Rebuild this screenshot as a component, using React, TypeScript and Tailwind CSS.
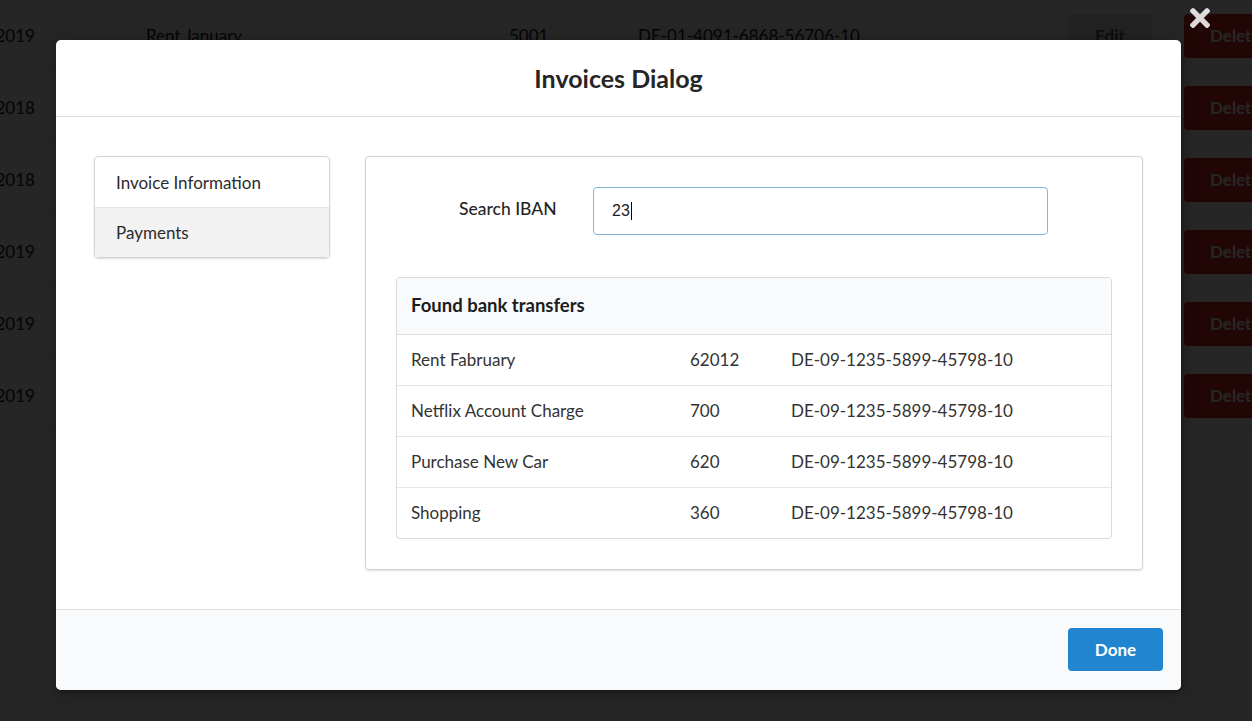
type Transfer = {
    title: string;
    amount: string;
    iban: string;
};

const transfers: Transfer[] = [
    { title: 'Rent Fabruary', amount: '62012', iban: 'DE-09-1235-5899-45798-10' },
    { title: 'Netflix Account Charge', amount: '700', iban: 'DE-09-1235-5899-45798-10' },
    { title: 'Purchase New Car', amount: '620', iban: 'DE-09-1235-5899-45798-10' },
    { title: 'Shopping', amount: '360', iban: 'DE-09-1235-5899-45798-10' },
];

const invoices = [
    { date: '01.01.2019', title: 'Rent January', amount: '5001', iban: 'DE-01-4091-6868-56706-10' },
    { date: '12.11.2018', title: 'Electricity', amount: '120', iban: 'DE-02-4091-6868-56706-10' },
    { date: '20.12.2018', title: 'Insurance', amount: '340', iban: 'DE-03-4091-6868-56706-10' },
    { date: '05.02.2019', title: 'Phone Bill', amount: '45', iban: 'DE-04-4091-6868-56706-10' },
    { date: '14.03.2019', title: 'Gym Membership', amount: '30', iban: 'DE-05-4091-6868-56706-10' },
    { date: '28.03.2019', title: 'Internet', amount: '40', iban: 'DE-06-4091-6868-56706-10' },
];

function CloseIcon() {
    return (
        <svg width="20" height="20" viewBox="0 80 352 352" fill="currentColor">
            <path d="M242.72 256l100.07-100.07c12.28-12.28 12.28-32.19 0-44.48l-22.24-22.24c-12.28-12.28-32.19-12.28-44.48 0L176 189.28 75.93 89.21c-12.28-12.28-32.19-12.28-44.48 0L9.21 111.45c-12.28 12.28-12.28 32.19 0 44.48L109.28 256 9.21 356.07c-12.28 12.28-12.28 32.19 0 44.48l22.24 22.24c12.28 12.28 32.2 12.28 44.48 0L176 322.72l100.07 100.07c12.28 12.28 32.2 12.28 44.48 0l22.24-22.24c12.28-12.28 12.28-32.19 0-44.48L242.72 256z" />
        </svg>
    );
}

export default function App() {
    return (
        <div className="relative h-[721px] overflow-hidden bg-white text-[17px] text-[#212121] [font-family:Lato,'Noto_Sans',sans-serif]">
            {/* page behind the dimmer */}
            <div className="-mt-px">
                {invoices.map((inv) => (
                    <div key={inv.date} className="flex h-[72px] items-center border-b border-[#e8e8e9] pt-[2px]">
                        <div className="ml-[-52px] w-[198px] shrink-0 text-right pr-[116px]">{inv.date}</div>
                        <div className="w-[363px] shrink-0">{inv.title}</div>
                        <div className="w-[129px] shrink-0">{inv.amount}</div>
                        <div className="w-[430px] shrink-0">{inv.iban}</div>
                        <div className="flex h-[44px] w-[84px] shrink-0 items-center justify-center rounded-[4px] bg-[#e0e1e2] font-bold text-black/60">
                            Edit
                        </div>
                        <div className="ml-[32px] flex h-[44px] w-[100px] shrink-0 items-center rounded-[4px] bg-[#db2828] pl-[26px] font-bold text-white">
                            Delete
                        </div>
                    </div>
                ))}
            </div>

            {/* dimmer + modal */}
            <div className="absolute inset-0 bg-black/85 pl-[56px] pt-[40px]">
                <div className="relative w-[1125px] rounded-[5px] bg-white shadow-[1px_3px_3px_0_rgba(0,0,0,0.2),1px_3px_15px_2px_rgba(0,0,0,0.2)]">
                    <button className="absolute right-[-29px] top-[-32px] text-white/85">
                        <CloseIcon />
                    </button>

                    <div className="flex h-[77px] items-center justify-center border-b border-[#dedede] pt-[2px] text-[25px] font-bold text-[#262626]">
                        Invoices Dialog
                    </div>

                    <div className="flex gap-[35px] px-[38px] pb-[39px] pt-[39px]">
                        <div className="h-fit w-[236px] shrink-0 rounded-[4px] border border-[#d4d4d5] text-[#2b2b2b] shadow-[0_1px_2px_0_rgba(34,36,38,0.15)]">
                            <div className="flex h-[51px] items-center border-b border-[#e5e5e6] pl-[21px] pt-[1px]">
                                Invoice Information
                            </div>
                            <div className="flex h-[49px] items-center bg-[#f2f2f2] pl-[21px]">Payments</div>
                        </div>

                        <div className="flex-1 rounded-[4px] border border-[#d4d4d5] p-[30px] shadow-[0_1px_2px_0_rgba(34,36,38,0.15)]">
                            <div className="flex items-center">
                                <label className="ml-[63px] w-[134px] shrink-0 pb-[4px] text-[17.5px] font-medium text-[#262626]">
                                    Search IBAN
                                </label>
                                <div className="flex h-[48px] w-[455px] items-center rounded-[4px] border border-[#85b7d9] pl-[18px] text-[16px] text-[#212121] [font-family:'Liberation_Sans',Arial,sans-serif]">
                                    23
                                    <span className="ml-px inline-block h-[18px] w-px bg-black" />
                                </div>
                            </div>

                            <div className="mt-[42px] overflow-hidden rounded-[4px] border border-[#dadada]">
                                <div className="flex h-[57px] items-center border-b border-[#e2e2e2] bg-[#f9fafb] pl-[14px] text-[18.5px] font-bold text-[#1c1c1c]">
                                    Found bank transfers
                                </div>
                                {transfers.map((t, i) => (
                                    <div
                                        key={t.title}
                                        className={`flex items-center text-[#333] ${i > 0 ? 'h-[51px] border-t border-[#e6e6e6]' : 'h-[50px]'}`}
                                    >
                                        <div className="w-[279px] shrink-0 pl-[14px]">{t.title}</div>
                                        <div className="w-[101px] shrink-0 pl-[14px]">{t.amount}</div>
                                        <div className="pl-[14px]">{t.iban}</div>
                                    </div>
                                ))}
                            </div>
                        </div>
                    </div>

                    <div className="flex h-[81px] justify-end rounded-b-[5px] border-t border-[#dedede] bg-[#f9fafb] pr-[18px] pt-[18px]">
                        <button className="h-[43px] w-[95px] rounded-[4px] bg-[#2185d0] text-[17px] font-bold text-white">
                            Done
                        </button>
                    </div>
                </div>
            </div>
        </div>
    );
}
